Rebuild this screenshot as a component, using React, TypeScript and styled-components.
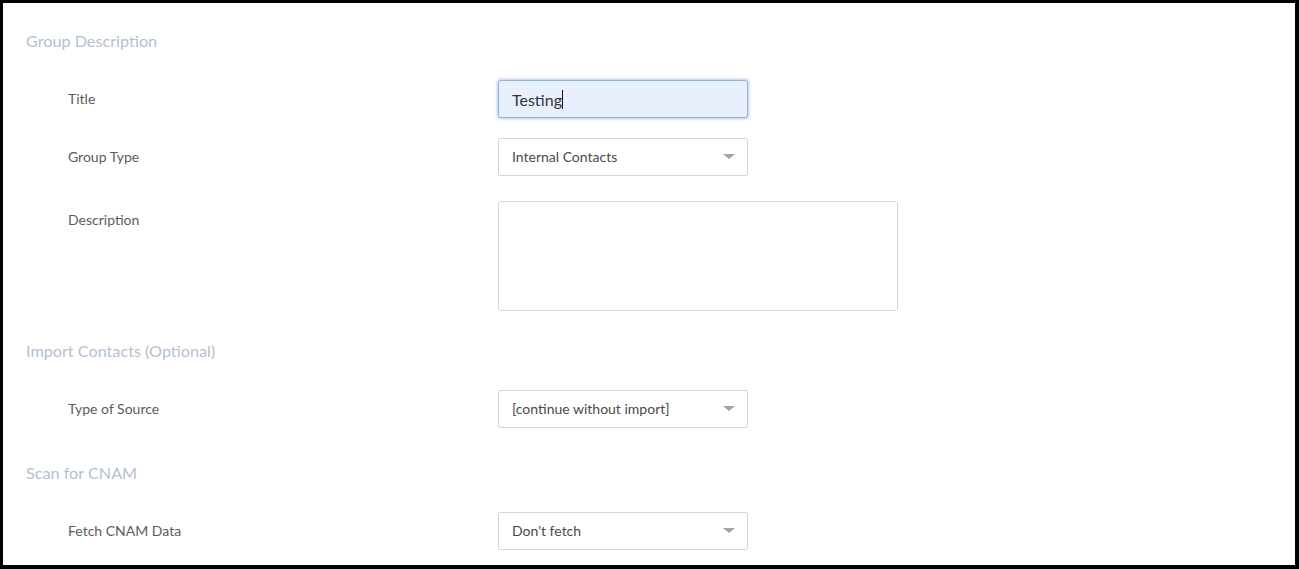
import styled, { createGlobalStyle } from 'styled-components';

const GlobalStyle = createGlobalStyle`
  html, body {
    margin: 0;
    padding: 0;
    background: #000;
  }
  body {
    font-family: Lato, "Liberation Sans", sans-serif;
    -webkit-font-smoothing: antialiased;
  }
`;

type Row = {
  label: string;
  kind: 'input' | 'select' | 'textarea';
  value?: string;
  focused?: boolean;
  space?: number;
};

type Section = { title: string; space: number; rows: Row[] };

const sections: Section[] = [
  {
    title: 'Group Description',
    space: 28,
    rows: [
      { label: 'Title', kind: 'input', value: 'Testing', focused: true },
      { label: 'Group Type', kind: 'select', value: 'Internal Contacts', space: 20 },
      { label: 'Description', kind: 'textarea', space: 25 },
    ],
  },
  {
    title: 'Import Contacts (Optional)',
    space: 30,
    rows: [{ label: 'Type of Source', kind: 'select', value: '[continue without import]' }],
  },
  {
    title: 'Scan for CNAM',
    space: 35,
    rows: [{ label: 'Fetch CNAM Data', kind: 'select', value: "Don't fetch" }],
  },
];

export default function App() {
  return (
    <>
      <GlobalStyle />
      <Frame>
        {sections.map((s) => (
          <FormSection key={s.title} $space={s.space}>
            <SectionTitle>{s.title}</SectionTitle>
            {s.rows.map((r, i) => (
              <FieldRow key={r.label} $space={i === 0 ? 29 : r.space ?? 20}>
                <FieldLabel>{r.label}</FieldLabel>
                {r.kind === 'input' && (
                  <TextField $focused={r.focused}>
                    {r.value}
                    {r.focused && <Caret />}
                  </TextField>
                )}
                {r.kind === 'select' && (
                  <SelectBox>
                    <span>{r.value}</span>
                    <Arrow />
                  </SelectBox>
                )}
                {r.kind === 'textarea' && <TextArea />}
              </FieldRow>
            ))}
          </FormSection>
        ))}
      </Frame>
    </>
  );
}

const Frame = styled.div`
  margin: 3px 4px 4px 3px;
  height: 562px;
  background: #fff;
  padding-left: 23px;
  box-sizing: border-box;
  overflow: hidden;
`;

const FormSection = styled.section<{ $space: number }>`
  display: flex;
  flex-direction: column;
  padding-top: ${(p) => p.$space}px;
`;

const SectionTitle = styled.h3`
  margin: 0;
  font-size: 16.2px;
  line-height: 20px;
  font-weight: 400;
  color: #b3c0d2;
`;

const FieldRow = styled.div<{ $space: number }>`
  display: grid;
  grid-template-columns: 430px auto;
  align-items: start;
  padding-left: 42px;
  margin-top: ${(p) => p.$space}px;
`;

const FieldLabel = styled.label`
  padding-top: 9px;
  font-size: 14px;
  line-height: 20px;
  color: #5c5c5c;
`;

const TextField = styled.div<{ $focused?: boolean }>`
  display: flex;
  align-items: center;
  box-sizing: border-box;
  width: 250px;
  height: 38px;
  padding: 0 13px;
  font-size: 16px;
  color: #333;
  border-radius: 3px;
  border: 1px solid ${(p) => (p.$focused ? '#8fb2dc' : '#d4d4d4')};
  background: ${(p) => (p.$focused ? '#e8f0fd' : '#fff')};
  box-shadow: ${(p) => (p.$focused ? '0 0 3px 1px rgba(120, 160, 215, 0.55)' : 'none')};
`;

const Caret = styled.span`
  display: inline-block;
  width: 1px;
  height: 19px;
  background: #111;
`;

const SelectBox = styled.div`
  display: flex;
  align-items: center;
  justify-content: space-between;
  box-sizing: border-box;
  width: 250px;
  height: 38px;
  padding: 0 12px 1px 13px;
  font-size: 14px;
  color: #4a4a4a;
  background: #fff;
  border: 1px solid #d6d6d6;
  border-radius: 2px;
`;

const Arrow = styled.span`
  width: 0;
  height: 0;
  border-left: 6px solid transparent;
  border-right: 6px solid transparent;
  border-top: 5px solid #a3a3a3;
`;

const TextArea = styled.div`
  box-sizing: border-box;
  width: 400px;
  height: 110px;
  border: 1px solid #d6d6d6;
  border-radius: 3px;
  background: #fff;
`;
